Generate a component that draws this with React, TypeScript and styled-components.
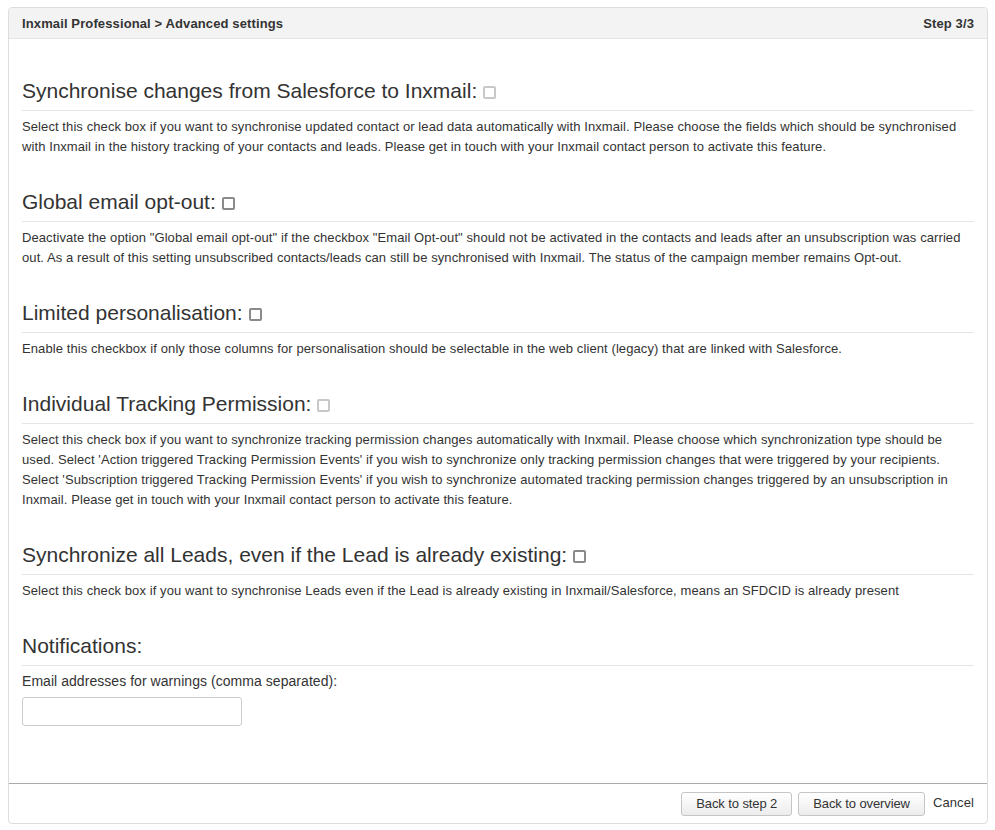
import React from "react";
import styled, { createGlobalStyle } from "styled-components";

const Global = createGlobalStyle`
  html, body { margin: 0; padding: 0; background: #fff; }
  body { font-family: "Liberation Sans", Arial, sans-serif; color: #333; }
`;

const Page = styled.div`
  padding: 7px 7px 7px 8px;
`;

const Panel = styled.div`
  border: 1px solid #ddd;
  border-radius: 4px;
  background: #fff;
  display: flex;
  flex-direction: column;
`;

const Header = styled.div`
  display: flex;
  justify-content: space-between;
  align-items: center;
  height: 30px;
  padding: 0 13px;
  background: #f3f3f3;
  border-bottom: 1px solid #e3e3e3;
  border-radius: 3px 3px 0 0;
  font-size: 13px;
  font-weight: bold;
  letter-spacing: 0.12px;
  color: #333;
`;

const Body = styled.div`
  padding: 40px 13px 57px;
  display: flex;
  flex-direction: column;
  gap: 33px;
`;

const Section = styled.section`
  display: flex;
  flex-direction: column;
`;

const Heading = styled.h3`
  margin: 0;
  font-size: 21px;
  font-weight: normal;
  line-height: 24px;
  padding-bottom: 7px;
  border-bottom: 1px solid #e5e5e5;
  color: #333;
  display: flex;
  align-items: center;
  gap: 6px;
`;

const Check = styled.input.attrs({ type: "checkbox" })<{ $light?: boolean }>`
  appearance: none;
  -webkit-appearance: none;
  margin: 2px 0 0;
  width: 13px;
  height: 13px;
  box-sizing: border-box;
  border: 2px solid ${(p) => (p.$light ? "#c8c8c8" : "#8a8a8a")};
  border-radius: 2px;
  background: #fff;
`;

const Text = styled.p`
  margin: 6px 0 0;
  font-size: 13px;
  letter-spacing: 0.09px;
  line-height: 20px;
  color: #333;
`;

const Label = styled.label`
  margin-top: 6px;
  font-size: 14px;
  letter-spacing: 0.05px;
  line-height: 18px;
  color: #333;
`;

const Field = styled.input`
  margin-top: 7px;
  width: 220px;
  height: 29px;
  box-sizing: border-box;
  border: 1px solid #ccc;
  border-radius: 3px;
  font-family: inherit;
`;

const Footer = styled.div`
  border-top: 1px solid #aaa;
  height: 39px;
  display: flex;
  justify-content: flex-end;
  align-items: center;
  padding: 0 13px;
  gap: 6px;
`;

const Button = styled.button`
  height: 24px;
  padding: 0 14px;
  border: 1px solid #c5c5c5;
  border-radius: 3px;
  background: linear-gradient(#ffffff, #ececec);
  font-family: "Liberation Sans", Arial, sans-serif;
  font-size: 13px;
  letter-spacing: -0.1px;
  color: #333;
`;

const Link = styled.span`
  font-size: 13px;
  letter-spacing: 0.1px;
  color: #333;
  margin-left: 2px;
  padding-bottom: 2px;
`;

const sections: { title: string; light: boolean; text: string }[] = [
  {
    title: "Synchronise changes from Salesforce to Inxmail:",
    light: true,
    text: "Select this check box if you want to synchronise updated contact or lead data automatically with Inxmail. Please choose the fields which should be synchronised with Inxmail in the history tracking of your contacts and leads. Please get in touch with your Inxmail contact person to activate this feature.",
  },
  {
    title: "Global email opt-out:",
    light: false,
    text: 'Deactivate the option "Global email opt-out" if the checkbox "Email Opt-out" should not be activated in the contacts and leads after an unsubscription was carried out. As a result of this setting unsubscribed contacts/leads can still be synchronised with Inxmail. The status of the campaign member remains Opt-out.',
  },
  {
    title: "Limited personalisation:",
    light: false,
    text: "Enable this checkbox if only those columns for personalisation should be selectable in the web client (legacy) that are linked with Salesforce.",
  },
  {
    title: "Individual Tracking Permission:",
    light: true,
    text: "Select this check box if you want to synchronize tracking permission changes automatically with Inxmail. Please choose which synchronization type should be used. Select 'Action triggered Tracking Permission Events' if you wish to synchronize only tracking permission changes that were triggered by your recipients. Select 'Subscription triggered Tracking Permission Events' if you wish to synchronize automated tracking permission changes triggered by an unsubscription in Inxmail. Please get in touch with your Inxmail contact person to activate this feature.",
  },
  {
    title: "Synchronize all Leads, even if the Lead is already existing:",
    light: false,
    text: "Select this check box if you want to synchronise Leads even if the Lead is already existing in Inxmail/Salesforce, means an SFDCID is already present",
  },
];

export default function App() {
  return (
    <Page>
      <Global />
      <Panel>
        <Header>
          <span>Inxmail Professional &gt; Advanced settings</span>
          <span>Step 3/3</span>
        </Header>
        <Body>
          {sections.map((s) => (
            <Section key={s.title}>
              <Heading>
                {s.title}
                <Check $light={s.light} />
              </Heading>
              <Text>{s.text}</Text>
            </Section>
          ))}
          <Section>
            <Heading>Notifications:</Heading>
            <Label htmlFor="warn">Email addresses for warnings (comma separated):</Label>
            <Field id="warn" type="text" />
          </Section>
        </Body>
        <Footer>
          <Button>Back to step 2</Button>
          <Button>Back to overview</Button>
          <Link>Cancel</Link>
        </Footer>
      </Panel>
    </Page>
  );
}
